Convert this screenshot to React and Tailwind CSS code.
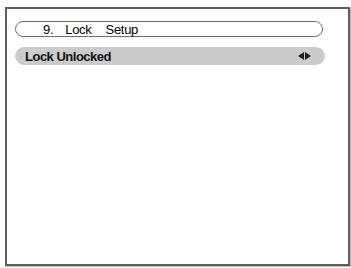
export default function App() {
  return (
    <div className="w-[351px] h-[268px] bg-white font-['Liberation_Sans',Arial,sans-serif] pt-[7px] pl-[5px]">
      <div className="w-[345px] h-[259px] border-2 border-[#5e5e5e] shadow-[1px_1px_0_#bdbdbd] pt-[12px] pl-[8px] flex flex-col gap-[10px]">
        <div className="w-[308px] h-[16px] rounded-full border-[1.5px] border-[#707070] flex items-center pl-[27px] text-[13px] tracking-[-0.3px] leading-none text-black">
          <span>9.</span>
          <span className="ml-[12px]">Lock</span>
          <span className="ml-[14px]">Setup</span>
        </div>
        <div className="w-[310px] h-[18px] rounded-full bg-[#cbcbcb] flex items-center justify-between pl-[10px] pr-[14px]">
          <span className="text-[13px] font-bold tracking-[-0.5px] leading-none text-[#111]">Lock Unlocked</span>
          <span className="flex items-center gap-[1px]">
            <svg width="6" height="8" viewBox="0 0 6 8"><path d="M6 0L0 4L6 8Z" fill="#1e1e1e" /></svg>
            <svg width="6" height="8" viewBox="0 0 6 8"><path d="M0 0L6 4L0 8Z" fill="#1e1e1e" /></svg>
          </span>
        </div>
      </div>
    </div>
  )
}
